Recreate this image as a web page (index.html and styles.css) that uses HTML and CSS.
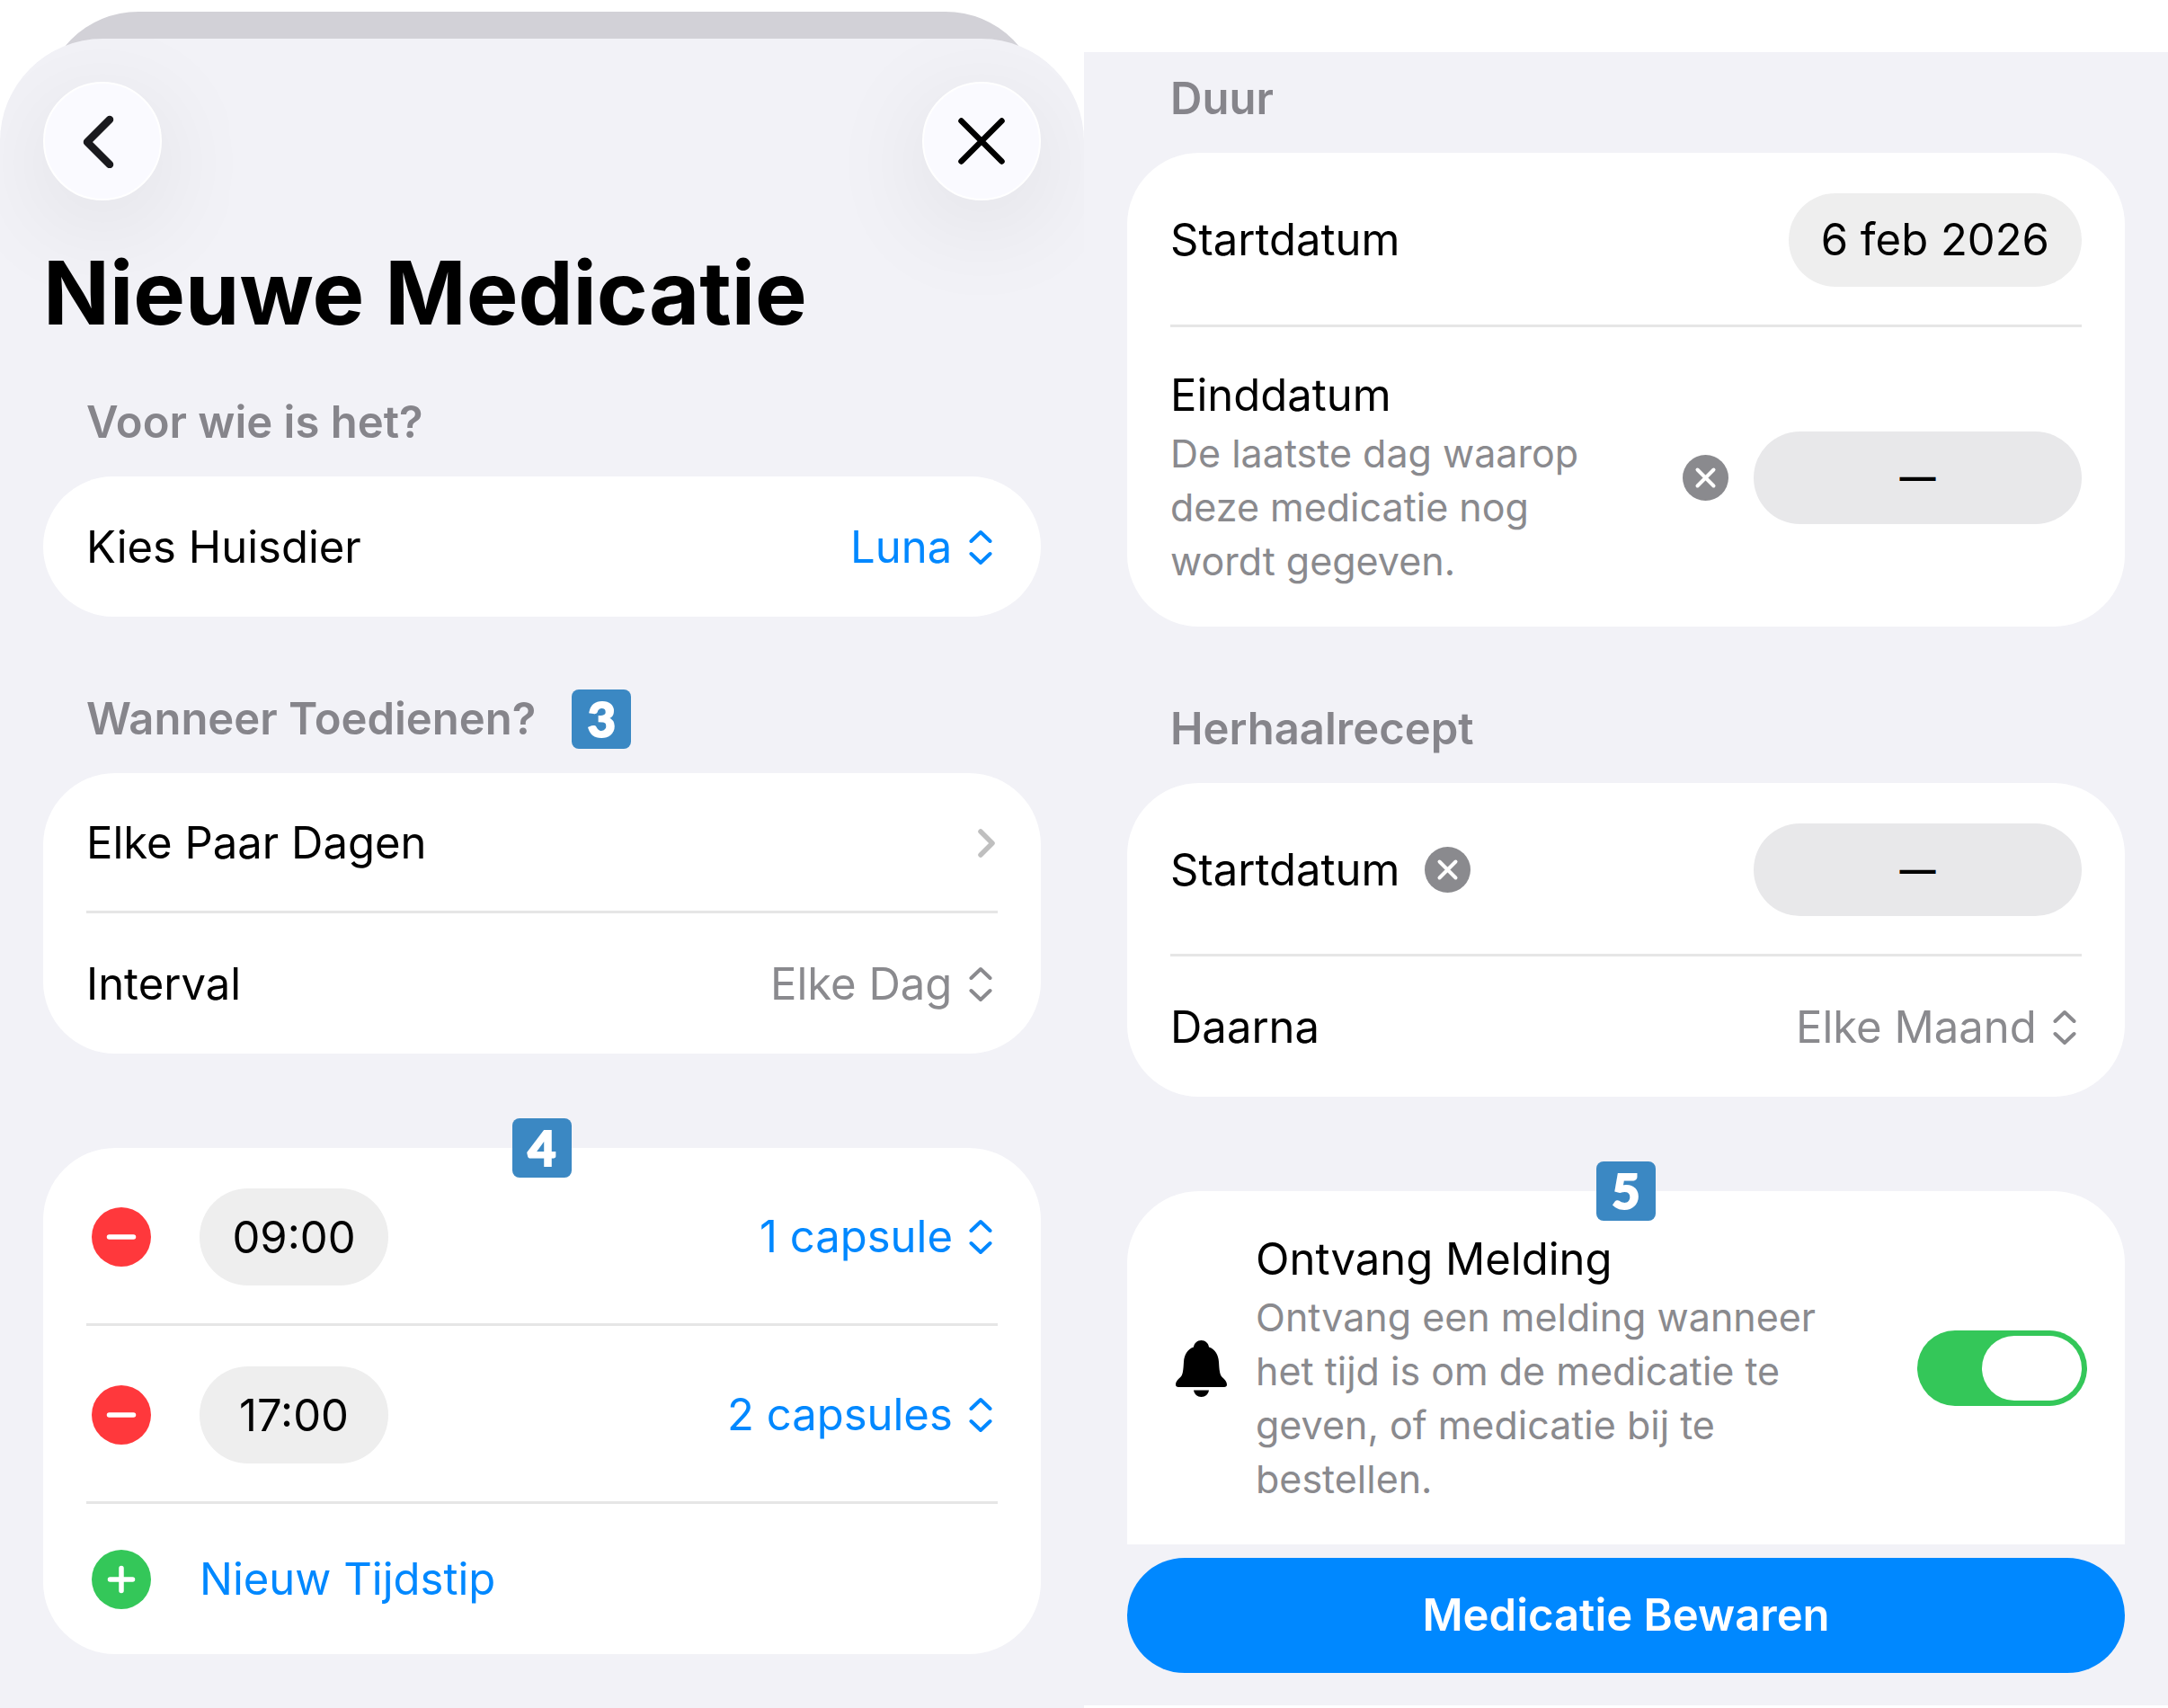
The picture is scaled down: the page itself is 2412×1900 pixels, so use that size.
FILE: index.html
```html
<!DOCTYPE html>
<html lang="nl">
<head>
    <meta charset="UTF-8">
    <meta name="viewport" content="width=device-width, initial-scale=1.0">
    <title>Nieuwe Medicatie</title>
    <link rel="stylesheet" href="styles.css">
</head>
<body>

    <!-- Gedeelde iconen -->
    <svg class="sprite" aria-hidden="true">
        <symbol id="updown" viewBox="0 0 32 40">
            <path d="M2.500 13L13 3l10.500 10M2.500 27L13 37l10.500-10" fill="none" stroke="currentColor" stroke-width="4" stroke-linecap="round" stroke-linejoin="round"/>
        </symbol>
        <symbol id="minus" viewBox="0 0 66 66">
            <circle cx="33" cy="33" r="33" fill="#ff383c"/>
            <path d="M19.500 33h27" stroke="#fff" stroke-width="5.500" stroke-linecap="round"/>
        </symbol>
        <symbol id="plus" viewBox="0 0 66 66">
            <circle cx="33" cy="33" r="33" fill="#34c759"/>
            <path d="M20.500 33h25M33 20.500v25" stroke="#fff" stroke-width="5.500" stroke-linecap="round"/>
        </symbol>
        <symbol id="clear" viewBox="0 0 51 51">
            <circle cx="25.500" cy="25.500" r="25.500" fill="#8a8a8e"/>
            <path d="M16.500 16.500l18 18M34.500 16.500l-18 18" stroke="#fff" stroke-width="4" stroke-linecap="round"/>
        </symbol>
    </svg>

    <main class="columns">
        <div class="column">
            <div class="sheet-back"></div>
            <div class="sheet">
                <div class="topbar">
                    <button type="button" class="round-button" aria-label="Terug">
                        <svg width="60" height="60" viewBox="0 0 60 60"><path d="M38 6L13 31l25 25" fill="none" stroke="#1a1a1e" stroke-width="8.500" stroke-linecap="round" stroke-linejoin="round"/></svg>
                    </button>
                    <button type="button" class="round-button" aria-label="Sluiten">
                        <svg width="60" height="60" viewBox="0 0 60 60"><path d="M7.500 7.500l45 45M52.500 7.500l-45 45" fill="none" stroke="#000" stroke-width="6.500" stroke-linecap="round"/></svg>
                    </button>
                </div>
                <h1>Nieuwe Medicatie</h1>

                <section class="section">
                    <h2>Voor wie is het?</h2>
                    <div class="card">
                        <div class="row">
                            <label for="huisdier">Kies Huisdier</label>
                            <div class="picker blue">
                                <select id="huisdier"><option>Luna</option></select>
                                <svg class="updown" aria-hidden="true"><use href="#updown"/></svg>
                            </div>
                        </div>
                    </div>
                </section>

                <section class="section">
                    <h2>Wanneer Toedienen? <span class="badge">3</span></h2>
                    <div class="card">
                        <a class="row" href="#schema">
                            <span>Elke Paar Dagen</span>
                            <svg class="chevron" viewBox="0 0 24 36" aria-hidden="true"><path d="M5 5l13 13L5 31" fill="none" stroke="#bfbfbf" stroke-width="5.500" stroke-linecap="round" stroke-linejoin="round"/></svg>
                        </a>
                        <div class="row">
                            <label for="interval">Interval</label>
                            <div class="picker">
                                <select id="interval"><option>Elke Dag</option></select>
                                <svg class="updown" aria-hidden="true"><use href="#updown"/></svg>
                            </div>
                        </div>
                    </div>
                </section>

                <section class="section untitled">
                    <span class="badge on-edge">4</span>
                    <div class="card">
                        <div class="row tall">
                            <button type="button" class="icon-button" aria-label="Verwijder 09:00"><svg width="66" height="66"><use href="#minus"/></svg></button>
                            <input class="pill time" type="text" value="09:00" aria-label="Tijdstip 1">
                            <div class="picker blue">
                                <select aria-label="Dosis 1"><option>1 capsule</option></select>
                                <svg class="updown" aria-hidden="true"><use href="#updown"/></svg>
                            </div>
                        </div>
                        <div class="row tall">
                            <button type="button" class="icon-button" aria-label="Verwijder 17:00"><svg width="66" height="66"><use href="#minus"/></svg></button>
                            <input class="pill time" type="text" value="17:00" aria-label="Tijdstip 2">
                            <div class="picker blue">
                                <select aria-label="Dosis 2"><option>2 capsules</option></select>
                                <svg class="updown" aria-hidden="true"><use href="#updown"/></svg>
                            </div>
                        </div>
                        <button type="button" class="row add-row">
                            <svg width="66" height="66" aria-hidden="true"><use href="#plus"/></svg>
                            <span>Nieuw Tijdstip</span>
                        </button>
                    </div>
                </section>
            </div>
        </div>

        <div class="column scrolled">
            <div class="panel">
                <section class="section">
                    <h2>Duur</h2>
                    <div class="card">
                        <div class="row tall">
                            <label for="start">Startdatum</label>
                            <button type="button" id="start" class="pill date">6 feb 2026</button>
                        </div>
                        <div class="row note-row">
                            <div class="note narrow">
                                <label for="eind">Einddatum</label>
                                <p>De laatste dag waarop deze medicatie nog wordt gegeven.</p>
                            </div>
                            <button type="button" class="icon-button push" aria-label="Wis einddatum"><svg width="51" height="51"><use href="#clear"/></svg></button>
                            <button type="button" id="eind" class="pill empty">—</button>
                        </div>
                    </div>
                </section>

                <section class="section">
                    <h2>Herhaalrecept</h2>
                    <div class="card">
                        <div class="row tall">
                            <label for="herhaal">Startdatum</label>
                            <button type="button" class="icon-button" aria-label="Wis startdatum"><svg width="51" height="51"><use href="#clear"/></svg></button>
                            <button type="button" id="herhaal" class="pill empty">—</button>
                        </div>
                        <div class="row">
                            <label for="daarna">Daarna</label>
                            <div class="picker">
                                <select id="daarna"><option>Elke Maand</option></select>
                                <svg class="updown" aria-hidden="true"><use href="#updown"/></svg>
                            </div>
                        </div>
                    </div>
                </section>

                <section class="section untitled">
                    <span class="badge on-edge">5</span>
                    <div class="card cut">
                        <div class="row note-row">
                            <svg class="bell" viewBox="0 0 57 63" aria-hidden="true">
                                <path d="M28.500 0c-4.500 0-8 3.200-8.500 7.500C13 10 9.500 16 9 24c-.4 6-.6 11-2 14.500C5.500 42 0 44 0 49.500 0 51 1.200 52 3 52h51c1.800 0 3-1 3-2.500 0-5.500-5.500-7.500-7-11-1.400-3.500-1.600-8.500-2-14.500-.5-8-4-14-11-16.500C36.500 3.200 33 0 28.500 0z"/>
                                <path d="M20 55.500h17c-.6 4.400-4.200 7.500-8.500 7.500s-7.900-3.100-8.500-7.500z"/>
                            </svg>
                            <div class="note">
                                <label for="melding">Ontvang Melding</label>
                                <p>Ontvang een melding wanneer het tijd is om de medicatie te geven, of medicatie bij te bestellen.</p>
                            </div>
                            <input id="melding" class="toggle" type="checkbox" checked>
                        </div>
                    </div>
                </section>

                <button type="submit" class="save">Medicatie Bewaren</button>
            </div>
        </div>
    </main>

</body>
</html>
```

FILE: styles.css
```css
* {
    box-sizing: border-box;
}
body {
    margin: 0;
    background: #fff;
    color: #000;
    font-family: Inter, "Liberation Sans", sans-serif;
    font-size: 49px;
    line-height: 60px;
}
h1, h2, p {
    margin: 0;
}
button, input, select {
    font: inherit;
    color: inherit;
    border: none;
    margin: 0;
    padding: 0;
    background: none;
}
button {
    cursor: pointer;
}
svg {
    display: block;
    flex: none;
}
.sprite {
    position: absolute;
    width: 0;
    height: 0;
}
.columns {
    display: grid;
    grid-template-columns: 1fr 1fr;
    min-height: 100vh;
}
.column {
    display: flex;
    flex-direction: column;
    min-width: 0;
    padding-top: 13px;
}
.scrolled {
    padding: 58px 0 3px;
}

/* Bladen */
.sheet-back {
    height: 110px;
    margin: 0 48px -80px;
    border-radius: 106px 106px 0 0;
    background: #d2d1d7;
}
.sheet, .panel {
    flex: 1;
    padding: 48px 48px 60px;
    background: #f2f2f7;
}
.sheet {
    position: relative;
    overflow: hidden;
    border-radius: 114px 114px 0 0;
}
.panel {
    padding: 22px 48px 35px;
}
.topbar {
    display: flex;
    justify-content: space-between;
}
.round-button {
    display: flex;
    align-items: center;
    justify-content: center;
    width: 132px;
    height: 132px;
    border: 2px solid #fff;
    border-radius: 50%;
    background: #fafaff;
    box-shadow: 0 24px 120px rgba(0, 0, 0, 0.09);
}
h1 {
    margin: 43px 0 54px;
    font-size: 97px;
    line-height: 120px;
    font-weight: 700;
}
h2 {
    display: flex;
    align-items: center;
    gap: 40px;
    height: 60px;
    margin-bottom: 30px;
    padding: 0 48px;
    color: #86858b;
    font-size: 49px;
    font-weight: 600;
}

/* Kaarten en rijen */
.section {
    position: relative;
}
.section + .section {
    margin-top: 84px;
}
.section + .untitled {
    margin-top: 105px;
}
.card {
    padding: 0 48px;
    border-radius: 80px;
    background: #fff;
}
.cut {
    border-radius: 80px 80px 0 0;
}
.row {
    display: flex;
    align-items: center;
    width: 100%;
    min-height: 156px;
    padding-top: 2px;
    color: #000;
    text-decoration: none;
    text-align: left;
}
.row:not(:last-child) {
    border-bottom: 3px solid #e6e6e6;
}
.tall {
    padding: 45px 0 42px;
}
.add-row {
    gap: 54px;
    min-height: 167px;
    padding: 0 0 0 6px;
    color: #0088ff;
}
.badge {
    display: flex;
    align-items: center;
    justify-content: center;
    width: 66px;
    height: 66px;
    border-radius: 8px;
    background: #3b88c3;
    color: #fff;
    font-family: Lato, sans-serif;
    font-size: 54px;
    font-weight: 900;
    -webkit-text-stroke: 2px #fff;
}
.on-edge {
    position: absolute;
    top: -33px;
    left: calc(50% - 33px);
}

/* Bediening */
.picker {
    display: flex;
    align-items: center;
    gap: 18px;
    margin-left: auto;
    color: #8a8a8e;
}
.blue {
    color: #0088ff;
}
.picker select {
    appearance: none;
    height: 60px;
    cursor: pointer;
}
.updown {
    width: 32px;
    height: 40px;
}
.chevron {
    width: 24px;
    height: 36px;
    margin-left: auto;
}
.pill {
    border-radius: 54px;
    background: #eee;
    text-align: center;
}
.time {
    width: 210px;
    height: 108px;
    margin-left: 54px;
}
.tall .icon-button:first-child {
    margin-left: 6px;
}
.date {
    height: 104px;
    margin-left: auto;
    padding: 0 36px;
}
.empty {
    width: 365px;
    height: 103px;
    margin-left: auto;
    background: #e8e8ea;
    font-size: 40px;
    font-weight: 600;
}
.icon-button {
    margin-left: 28px;
}
.push {
    margin-left: auto;
}
.push + .empty {
    margin-left: 28px;
}
.note-row {
    padding: 44px 0 43px;
}
.note {
    flex: 1;
    padding-top: 2px;
}
.note label {
    display: block;
}
.note p {
    margin-top: 4px;
    color: #8a8a8e;
    font-size: 43px;
}
.narrow {
    flex: none;
    width: 480px;
}
.bell {
    width: 57px;
    height: 63px;
    margin: 0 32px 0 6px;
}
.toggle {
    appearance: none;
    display: flex;
    flex: none;
    width: 189px;
    height: 84px;
    margin: 0 -6px 0 80px;
    padding: 6px;
    border-radius: 42px;
    background: #d2d1d7;
    cursor: pointer;
}
.toggle::before {
    content: "";
    width: 111px;
    border-radius: 36px;
    background: #fff;
}
.toggle:checked {
    justify-content: flex-end;
    background: #34c759;
}
.save {
    display: block;
    width: 100%;
    height: 128px;
    margin-top: 15px;
    border-radius: 64px;
    background: #0088ff;
    color: #fff;
    font-weight: 600;
}
```
